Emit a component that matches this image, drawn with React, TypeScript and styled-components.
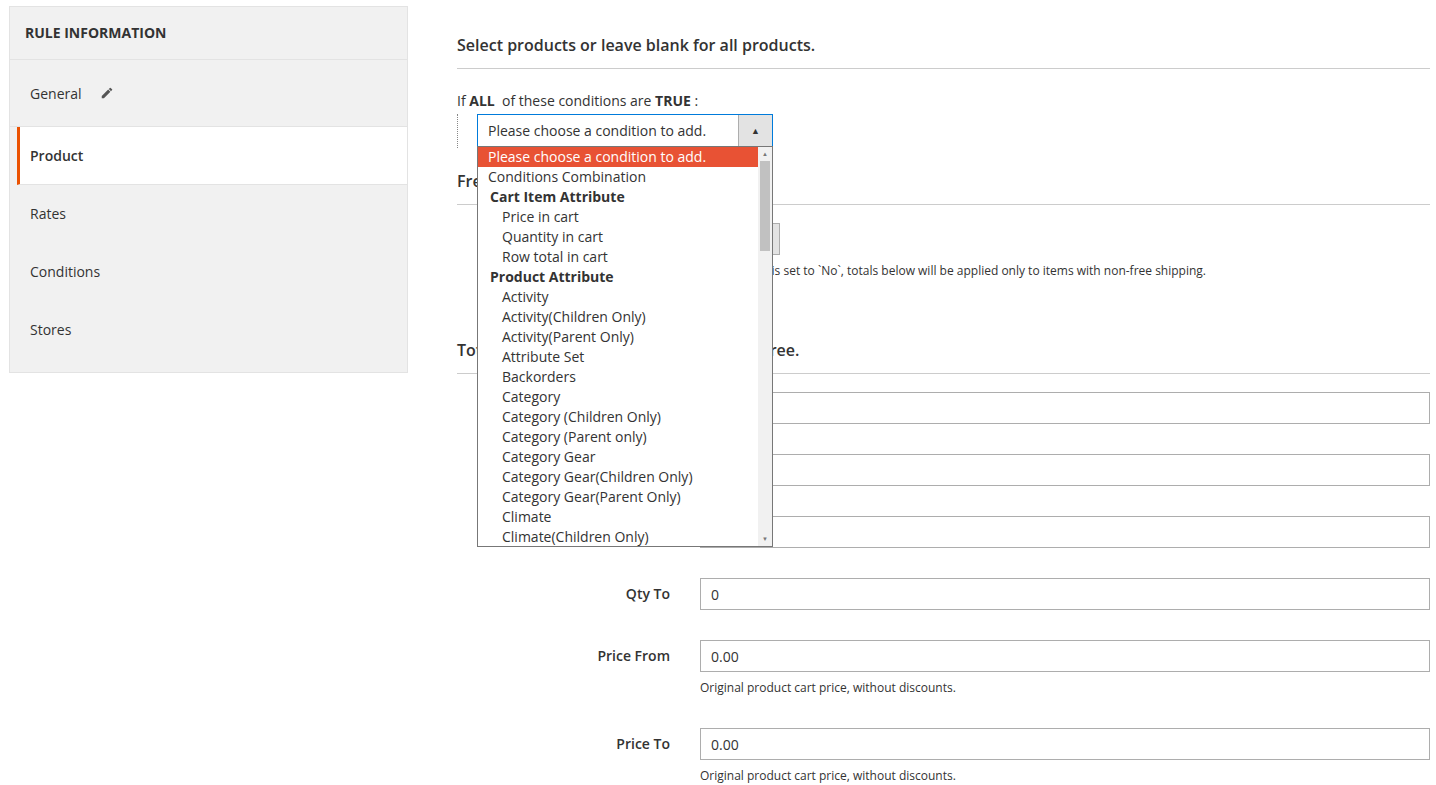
import React from 'react';
import styled, {createGlobalStyle} from 'styled-components';

const GlobalStyle = createGlobalStyle`
  body {
    margin: 0;
    font-family: "Open Sans", "Noto Sans", sans-serif;
    color: #333;
    background: #fff;
  }
`

type Opt = {label: string; kind: 'selected' | 'top' | 'group' | 'item'};

const options: Opt[] = [
    {label: 'Please choose a condition to add.', kind: 'selected'},
    {label: 'Conditions Combination', kind: 'top'},
    {label: 'Cart Item Attribute', kind: 'group'},
    {label: 'Price in cart', kind: 'item'},
    {label: 'Quantity in cart', kind: 'item'},
    {label: 'Row total in cart', kind: 'item'},
    {label: 'Product Attribute', kind: 'group'},
    {label: 'Activity', kind: 'item'},
    {label: 'Activity(Children Only)', kind: 'item'},
    {label: 'Activity(Parent Only)', kind: 'item'},
    {label: 'Attribute Set', kind: 'item'},
    {label: 'Backorders', kind: 'item'},
    {label: 'Category', kind: 'item'},
    {label: 'Category (Children Only)', kind: 'item'},
    {label: 'Category (Parent only)', kind: 'item'},
    {label: 'Category Gear', kind: 'item'},
    {label: 'Category Gear(Children Only)', kind: 'item'},
    {label: 'Category Gear(Parent Only)', kind: 'item'},
    {label: 'Climate', kind: 'item'},
    {label: 'Climate(Children Only)', kind: 'item'},
];

const fields = [
    {label: 'Weight From', value: '0.00'},
    {label: 'Weight To', value: '0.00'},
    {label: 'Qty From', value: '0'},
    {label: 'Qty To', value: '0'},
    {label: 'Price From', value: '0.00', note: 'Original product cart price, without discounts.'},
    {label: 'Price To', value: '0.00', note: 'Original product cart price, without discounts.'},
];

const tabs = ['General', 'Product', 'Rates', 'Conditions', 'Stores'];

export default function App() {
    return (
        <Page>
            <GlobalStyle/>
            <Sidebar>
                <SideTitle>RULE INFORMATION</SideTitle>
                {tabs.map(t => (
                    <Tab key={t} active={t === 'Product'} tall={t === 'General'}>
                        {t}
                        {t === 'General' && (
                            <svg width="14" height="14" viewBox="0 0 24 24" fill="#555">
                                <path d="M3 17.25V21h3.75L17.8 9.94l-3.75-3.75L3 17.25zM20.7 7.04a1 1 0 0 0 0-1.41l-2.34-2.34a1 1 0 0 0-1.41 0l-1.83 1.83 3.75 3.75 1.83-1.83z"/>
                            </svg>
                        )}
                    </Tab>
                ))}
            </Sidebar>
            <Main>
                <SectionTitle>Select products or leave blank for all products.</SectionTitle>
                <CondLine>If <b>ALL</b>&nbsp; of these conditions are <b>TRUE</b> :</CondLine>
                <CondTree>
                    <SelectBox>
                        <SelectText>Please choose a condition to add.</SelectText>
                        <SelectArrow>▲</SelectArrow>
                        <DropList>
                            <Options>
                                {options.map(o => <Option key={o.label} kind={o.kind}>{o.label}</Option>)}
                            </Options>
                            <Scroll>
                                <ScrollBtn>▲</ScrollBtn>
                                <ScrollTrack><ScrollThumb/></ScrollTrack>
                                <ScrollBtn>▼</ScrollBtn>
                            </Scroll>
                        </DropList>
                    </SelectBox>
                </CondTree>

                <SectionTitle spaced>Free Shipping</SectionTitle>
                <FieldRow>
                    <Label>Free Shipping</Label>
                    <FieldCol>
                        <SmallSelect/>
                        <Note>If the option is set to `No`, totals below will be applied only to items with non-free shipping.</Note>
                    </FieldCol>
                </FieldRow>

                <SectionTitle spaced wide>Totals and ranges for items shipped for free.</SectionTitle>
                <Fields>
                    {fields.map(f => (
                        <FieldRow key={f.label}>
                            <Label>{f.label}</Label>
                            <FieldCol>
                                <Input>{f.value}</Input>
                                {f.note && <Note>{f.note}</Note>}
                            </FieldCol>
                        </FieldRow>
                    ))}
                </Fields>
            </Main>
        </Page>
    );
}

const Page = styled.div`
  display: flex;
  align-items: flex-start;
  padding: 6px 6px 0 9px;
  gap: 50px;
`

const Sidebar = styled.div`
  width: 397px;
  flex-shrink: 0;
  background: #f1f1f1;
  border: 1px solid #e3e3e3;
  padding-bottom: 14px;
`

const SideTitle = styled.div`
  font-size: 14px;
  font-weight: 700;
  padding: 16px 15px;
  height: 20px;
  border-bottom: 1px solid #e3e3e3;
`

const Tab = styled.div<{active?: boolean; tall?: boolean}>`
  display: flex;
  align-items: center;
  gap: 18px;
  height: ${p => p.tall ? '66px' : '57px'};
  font-size: 14px;
  font-weight: ${p => p.active ? 600 : 400};
  background: ${p => p.active ? '#fff' : 'transparent'};
  margin-left: ${p => p.active ? '7px' : '0'};
  padding-left: ${p => p.active ? '10px' : '20px'};
  border-left: ${p => p.active ? '3px solid #eb5202' : 'none'};
  border-bottom: 1px solid ${p => p.tall || p.active ? '#e3e3e3' : 'transparent'};
  &:last-child { border-bottom: none; }
`

const Main = styled.div`
  flex: 1;
  padding-top: 28px;
`

const SectionTitle = styled.h3<{spaced?: boolean; wide?: boolean}>`
  margin: ${p => p.wide ? '58px 0 18px' : p.spaced ? '22px 0 18px' : '0 0 22px'};
  margin-left: -1px;
  font-size: 16px;
  font-weight: 600;
  color: #333;
  padding-bottom: 12px;
  border-bottom: 1px solid #ccc;
`

const CondLine = styled.div`
  font-size: 14px;
  margin-left: -1px;
`

const CondTree = styled.div`
  border-left: 1px dotted #888;
  margin-top: 4px;
  margin-left: -1px;
  padding-left: 19px;
  height: 34px;
`

const SelectBox = styled.div`
  position: relative;
  display: flex;
  width: 294px;
  height: 31px;
  border: 1px solid #007bdb;
  background: #fff;
`

const SelectText = styled.div`
  flex: 1;
  font-size: 14px;
  line-height: 31px;
  padding-left: 10px;
`

const SelectArrow = styled.div`
  width: 33px;
  background: #e3e3e3;
  border-left: 1px solid #adadad;
  font-size: 9px;
  text-align: center;
  line-height: 31px;
  color: #333;
`

const DropList = styled.div`
  position: absolute;
  top: 31px;
  left: -1px;
  width: 294px;
  height: 399px;
  border: 1px solid #777;
  background: #fff;
  display: flex;
  z-index: 5;
  overflow: hidden;
`

const Options = styled.div`
  flex: 1;
`

const Option = styled.div<{kind: Opt['kind']}>`
  font-size: 14px;
  height: 20px;
  line-height: 20px;
  white-space: nowrap;
  padding-left: ${p => p.kind === 'item' ? '24px' : p.kind === 'group' ? '12px' : '10px'};
  font-weight: ${p => p.kind === 'group' ? 700 : 400};
  background: ${p => p.kind === 'selected' ? '#e85234' : 'transparent'};
  color: ${p => p.kind === 'selected' ? '#fff' : '#333'};
`

const Scroll = styled.div`
  width: 14px;
  background: #f1f1f1;
  display: flex;
  flex-direction: column;
`

const ScrollBtn = styled.div`
  height: 14px;
  font-size: 6px;
  color: #777;
  text-align: center;
  line-height: 14px;
`

const ScrollTrack = styled.div`
  flex: 1;
`

const ScrollThumb = styled.div`
  margin: 0 2px;
  height: 90px;
  background: #c1c1c1;
`

const Fields = styled.div`
  display: flex;
  flex-direction: column;
  gap: 30px;
`

const FieldRow = styled.div`
  display: flex;
  gap: 30px;
`

const Label = styled.div`
  width: 212px;
  text-align: right;
  font-size: 14px;
  font-weight: 600;
  line-height: 32px;
`

const FieldCol = styled.div`
  flex: 1;
  display: flex;
  flex-direction: column;
  gap: 7px;
`

const Input = styled.div`
  height: 32px;
  border: 1px solid #adadad;
  font-size: 14px;
  line-height: 32px;
  padding-left: 10px;
  box-sizing: border-box;
`

const SmallSelect = styled.div`
  width: 80px;
  height: 32px;
  background: #e3e3e3;
  border: 1px solid #adadad;
  box-sizing: border-box;
`

const Note = styled.div`
  font-size: 12px;
  color: #333;
  margin-bottom: 2px;
`
